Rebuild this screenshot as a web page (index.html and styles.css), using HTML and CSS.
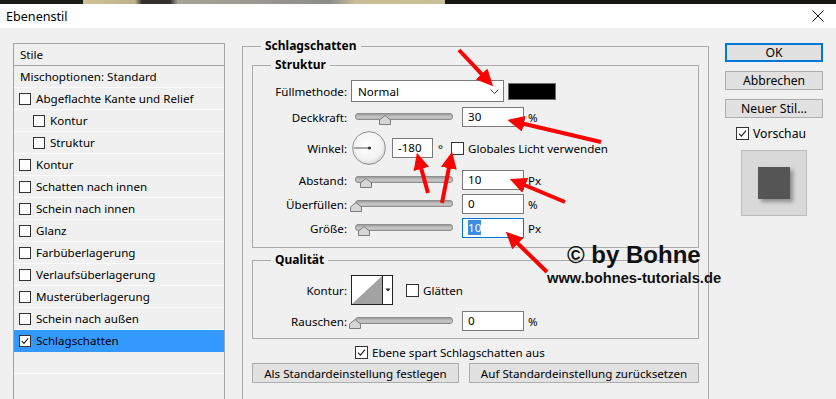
FILE: index.html
```html
<!DOCTYPE html>
<html lang="de">

<head>
    <meta charset="UTF-8">
    <meta name="viewport" content="width=device-width, initial-scale=1.0">
    <title>Ebenenstil</title>
    <link rel="stylesheet" href="styles.css">
</head>

<body>
    <div class="photo-strip"></div>

    <header class="titlebar">
        <span class="title">Ebenenstil</span>
        <svg class="close" width="12" height="12" viewBox="0 0 12 12">
            <path d="M0.5 0.5 L11.5 11.5 M11.5 0.5 L0.5 11.5" stroke="#111" stroke-width="1" fill="none" />
        </svg>
    </header>

    <div class="dialog">
        <ul class="style-list">
            <li class="list-head">Stile</li>
            <li class="plain">Mischoptionen: Standard</li>
            <li><span class="box"></span>Abgeflachte Kante und Relief</li>
            <li class="sub"><span class="box"></span>Kontur</li>
            <li class="sub"><span class="box"></span>Struktur</li>
            <li><span class="box"></span>Kontur</li>
            <li><span class="box"></span>Schatten nach innen</li>
            <li><span class="box"></span>Schein nach innen</li>
            <li><span class="box"></span>Glanz</li>
            <li><span class="box"></span>Farbüberlagerung</li>
            <li><span class="box"></span>Verlaufsüberlagerung</li>
            <li><span class="box"></span>Musterüberlagerung</li>
            <li><span class="box"></span>Schein nach außen</li>
            <li class="selected">
                <span class="box">
                    <svg viewBox="0 0 12 12"><path d="M2.2 6.2 L4.8 8.8 L9.8 2.8" /></svg>
                </span>Schlagschatten
            </li>
            <li class="plain"></li>
        </ul>

        <fieldset class="group outer">
            <legend>Schlagschatten</legend>

            <fieldset class="group inner">
                <legend>Struktur</legend>

                <div class="row row-select">
                    <span class="lbl">Füllmethode:</span>
                    <div class="select">
                        <span>Normal</span>
                        <svg width="9" height="5" viewBox="0 0 9 5"><path d="M0.5 0.5 L4.5 4.5 L8.5 0.5" /></svg>
                    </div>
                    <div class="swatch"></div>
                </div>

                <div class="row gap5">
                    <span class="lbl">Deckkraft:</span>
                    <div class="slider">
                        <svg class="thumb" style="left: 28px" width="12" height="10" viewBox="0 0 12 10"><path d="M6 0.5 L11.5 5 L11.5 9.5 L0.5 9.5 L0.5 5 Z" /></svg>
                    </div>
                    <div class="field">30</div>
                    <span class="unit">%</span>
                </div>

                <div class="row row-angle">
                    <span class="lbl">Winkel:</span>
                    <svg class="dial" width="34" height="34" viewBox="0 0 34 34">
                        <defs>
                            <radialGradient id="dialFill" cx="45%" cy="40%" r="65%">
                                <stop offset="0" stop-color="#ffffff" />
                                <stop offset="0.7" stop-color="#f2f2f2" />
                                <stop offset="1" stop-color="#cfcfcf" />
                            </radialGradient>
                        </defs>
                        <circle cx="17" cy="17" r="16.4" fill="url(#dialFill)" stroke="#8f8f8f" />
                        <line x1="2" y1="17" x2="17" y2="17" stroke="#555" stroke-width="1" />
                        <circle cx="17.5" cy="17" r="1.6" fill="#333" />
                    </svg>
                    <div class="field angle">-180</div>
                    <span class="degree">°</span>
                    <span class="box panel-box"></span>
                    <span class="check-label">Globales Licht verwenden</span>
                </div>

                <div class="row gap5">
                    <span class="lbl">Abstand:</span>
                    <div class="slider">
                        <svg class="thumb" style="left: 9px" width="12" height="10" viewBox="0 0 12 10"><path d="M6 0.5 L11.5 5 L11.5 9.5 L0.5 9.5 L0.5 5 Z" /></svg>
                    </div>
                    <div class="field">10</div>
                    <span class="unit">Px</span>
                </div>

                <div class="row">
                    <span class="lbl">Überfüllen:</span>
                    <div class="slider">
                        <svg class="thumb" style="left: -1px" width="12" height="10" viewBox="0 0 12 10"><path d="M6 0.5 L11.5 5 L11.5 9.5 L0.5 9.5 L0.5 5 Z" /></svg>
                    </div>
                    <div class="field">0</div>
                    <span class="unit">%</span>
                </div>

                <div class="row">
                    <span class="lbl">Größe:</span>
                    <div class="slider">
                        <svg class="thumb" style="left: 7px" width="12" height="10" viewBox="0 0 12 10"><path d="M6 0.5 L11.5 5 L11.5 9.5 L0.5 9.5 L0.5 5 Z" /></svg>
                    </div>
                    <div class="field focused"><span class="sel">10</span></div>
                    <span class="unit">Px</span>
                </div>
            </fieldset>

            <fieldset class="group inner quality">
                <legend>Qualität</legend>

                <div class="row row-contour">
                    <span class="lbl">Kontur:</span>
                    <svg class="contour" width="42" height="30" viewBox="0 0 42 30">
                        <rect x="0.5" y="0.5" width="41" height="29" fill="#fff" stroke="#222" />
                        <polygon points="1,29 31,1 31,29" fill="#a3a3a3" />
                        <line x1="31.5" y1="0" x2="31.5" y2="30" stroke="#222" />
                        <polygon points="34.5,13.5 39.5,13.5 37,16.5" fill="#222" />
                    </svg>
                    <span class="box panel-box"></span>
                    <span class="check-label">Glätten</span>
                </div>

                <div class="row">
                    <span class="lbl">Rauschen:</span>
                    <div class="slider">
                        <svg class="thumb" style="left: -2px" width="12" height="10" viewBox="0 0 12 10"><path d="M6 0.5 L11.5 5 L11.5 9.5 L0.5 9.5 L0.5 5 Z" /></svg>
                    </div>
                    <div class="field">0</div>
                    <span class="unit">%</span>
                </div>
            </fieldset>

            <div class="knockout">
                <span class="box panel-box">
                    <svg viewBox="0 0 12 12"><path d="M2.2 6.2 L4.8 8.8 L9.8 2.8" /></svg>
                </span>
                <span class="check-label">Ebene spart Schlagschatten aus</span>
            </div>

            <div class="defaults">
                <button class="btn set">Als Standardeinstellung festlegen</button>
                <button class="btn reset">Auf Standardeinstellung zurücksetzen</button>
            </div>
        </fieldset>

        <aside class="actions">
            <button class="btn side primary">OK</button>
            <button class="btn side">Abbrechen</button>
            <button class="btn side">Neuer Stil...</button>
            <div class="preview-toggle">
                <span class="box panel-box">
                    <svg viewBox="0 0 12 12"><path d="M2.2 6.2 L4.8 8.8 L9.8 2.8" /></svg>
                </span>
                <span class="check-label">Vorschau</span>
            </div>
            <div class="preview">
                <div class="preview-square"></div>
            </div>
        </aside>
    </div>

    <!-- tutorial annotations drawn over the dialog -->
    <div class="watermark">
        <div class="wm-big">© by Bohne</div>
        <div class="wm-url">www.bohnes-tutorials.de</div>
    </div>

    <svg class="arrows" width="836" height="399" viewBox="0 0 836 399">
        <defs>
            <marker id="head" viewBox="0 0 10 10" refX="6" refY="5" markerWidth="4.2" markerHeight="4"
                markerUnits="strokeWidth" orient="auto" preserveAspectRatio="none">
                <path d="M0 0 L10 5 L0 10 Z" fill="#f00" />
            </marker>
        </defs>
        <line x1="459" y1="50" x2="488.5" y2="81.4" />
        <line x1="601" y1="142" x2="514" y2="121.5" />
        <line x1="428" y1="193" x2="418.7" y2="159.2" />
        <line x1="442" y1="203" x2="450.8" y2="158.3" />
        <line x1="565" y1="202" x2="516" y2="181.5" />
        <line x1="547" y1="272" x2="510.6" y2="236.5" />
    </svg>
</body>

</html>
```

FILE: styles.css
```css
/* General Reset */
* {
    margin: 0;
    padding: 0;
    box-sizing: border-box;
}

html,
body {
    width: 836px;
    height: 399px;
    overflow: hidden;
}

body {
    position: relative;
    font-family: 'Noto Sans', sans-serif;
    font-size: 11.6px;
    color: #000;
    background-color: #f0f0f0;
}

/* strip of the photo behind the window */
.photo-strip {
    height: 4px;
    background: linear-gradient(to right,
            #1c1b17 0, #1c1b17 83px,
            #cdc29a 83px, #bdb28a 135px, #34302a 142px, #34302a 170px,
            #a7a397 178px, #8d8d88 330px, #c8be96 355px, #c9bf97 445px,
            #18170f 445px, #18170f 836px);
}

.titlebar {
    display: flex;
    justify-content: space-between;
    align-items: center;
    height: 24px;
    padding: 0 12px 0 6px;
    background-color: #fff;
    font-size: 12.6px;
}

.close {
    display: block;
}

.dialog {
    display: flex;
    align-items: flex-start;
    height: 371px;
    padding: 10px 0 0 13px;
}

/* left list of styles */
.style-list {
    flex-shrink: 0;
    width: 212px;
    height: 370px;
    margin-top: 5px;
    list-style: none;
    border: 1px solid #a5a5a5;
    background-color: #f0f0f0;
}

.style-list li {
    display: flex;
    align-items: center;
    gap: 5px;
    height: 22px;
    padding-left: 5px;
    border-bottom: 1px solid #fbfbfb;
}

.style-list li.plain {
    padding-left: 6px;
}

.style-list li.list-head {
    padding-left: 6px;
    border-bottom: 1px solid #a5a5a5;
}

.style-list li.sub {
    padding-left: 19px;
}

.style-list li.selected {
    background-color: #3399ff;
    border-bottom-color: #3399ff;
}

.box {
    flex-shrink: 0;
    display: block;
    width: 12px;
    height: 12px;
    border: 1px solid #333;
    background-color: #fff;
}

.box svg {
    display: block;
    width: 10px;
    height: 10px;
}

.box svg path {
    fill: none;
    stroke: #222;
    stroke-width: 1.3;
}

.panel-box {
    width: 13px;
    height: 13px;
}

.panel-box svg {
    width: 11px;
    height: 11px;
}

/* group boxes */
.group {
    min-width: 0;
    border: 1px solid #ababab;
}

.group legend {
    padding: 0 4px;
    font-size: 12px;
    font-weight: bold;
    line-height: 16px;
}

.outer {
    flex-shrink: 0;
    width: 467px;
    height: 380px;
    margin-left: 17px;
    padding: 3px 9px 0;
}

.outer > legend {
    margin-left: 9px;
}

.inner {
    width: 447px;
    padding: 7px 0 9px;
}

.inner > legend {
    margin-left: 18px;
}

.quality {
    margin-top: 4px;
    padding-bottom: 7px;
}

/* form rows */
.row {
    display: flex;
    align-items: center;
    height: 20px;
    margin-top: 4px;
}

.row.gap5 {
    margin-top: 5px;
}

.row-select {
    height: 22px;
    margin-top: 0;
}

.row-angle {
    height: 34px;
}

.row-contour {
    height: 30px;
    margin-top: 0;
}

.quality .row-contour + .row {
    margin-top: 6px;
}

.lbl {
    flex-shrink: 0;
    width: 94px;
    text-align: right;
}

.select {
    display: flex;
    justify-content: space-between;
    align-items: center;
    width: 153px;
    height: 22px;
    margin-left: 4px;
    padding: 0 4px 0 6px;
    border: 1px solid #7a7a7a;
    background-color: #fff;
}

.select svg path {
    fill: none;
    stroke: #444;
    stroke-width: 1;
}

.swatch {
    width: 48px;
    height: 17px;
    margin-left: 4px;
    border: 1px solid #6d6d6d;
    background-color: #000;
}

.slider {
    position: relative;
    flex-shrink: 0;
    width: 106px;
    height: 20px;
    margin-left: 4px;
}

.slider::before {
    content: "";
    position: absolute;
    left: 4px;
    right: 4px;
    top: 6px;
    height: 5px;
    border-radius: 3px;
    border: 1px solid #8d8d8d;
    background: linear-gradient(#9a9a9a, #c9c9c9 60%, #b3b3b3);
}

.thumb {
    position: absolute;
    top: 8px;
}

.thumb path {
    fill: #d6d6d6;
    stroke: #7c7c7c;
    stroke-width: 1;
}

.field {
    flex-shrink: 0;
    width: 62px;
    height: 20px;
    margin-left: 5px;
    padding-left: 5px;
    border: 1px solid #7a7a7a;
    background-color: #fff;
    line-height: 18px;
}

.field.focused {
    border-color: #0078d7;
}

.sel {
    background-color: #3a8fe3;
    color: #fff;
}

.unit {
    margin-left: 4px;
}

.dial {
    flex-shrink: 0;
    margin-left: 5px;
}

.field.angle {
    width: 41px;
    margin-left: 6px;
}

.degree {
    margin-left: 5px;
    margin-right: 8px;
}

.check-label {
    margin-left: 4px;
}

.contour {
    flex-shrink: 0;
    display: block;
    margin-left: 4px;
    margin-right: 13px;
}

.knockout {
    display: flex;
    align-items: center;
    height: 14px;
    margin-top: 6px;
    padding-left: 103px;
}

.defaults {
    display: flex;
    gap: 10px;
    margin-top: 4px;
}

.btn {
    height: 20px;
    border: 1px solid #adadad;
    background-color: #e1e1e1;
    font: inherit;
    color: #000;
}

.btn.set {
    width: 207px;
}

.btn.reset {
    width: 230px;
}

/* right column */
.actions {
    display: flex;
    flex-direction: column;
    align-items: center;
    flex-shrink: 0;
    width: 98px;
    margin-top: 5px;
    margin-left: 16px;
}

.btn.side {
    width: 98px;
    height: 19px;
    margin-bottom: 9px;
    font-size: 12.2px;
    line-height: 15px;
}

.btn.primary {
    border: 2px solid #0078d7;
}

.preview-toggle {
    display: flex;
    align-items: center;
    margin-top: -2px;
    margin-left: -6px;
    font-size: 12.2px;
}

.preview {
    display: flex;
    justify-content: center;
    align-items: center;
    width: 66px;
    height: 66px;
    margin-top: 8px;
    border: 1px solid #bcbcbc;
    background-color: #d9d9d9;
}

.preview-square {
    width: 32px;
    height: 32px;
    background-color: #555;
    box-shadow: 3px 3px 4px rgba(0, 0, 0, 0.35);
}

/* annotations */
.watermark {
    position: absolute;
    left: 547px;
    top: 243px;
    font-family: 'Liberation Sans', Arial, sans-serif;
    font-weight: bold;
    color: #111;
}

.wm-big {
    margin-left: 20px;
    font-size: 24px;
    line-height: 24px;
}

.wm-url {
    margin-top: 4px;
    font-size: 14.7px;
    line-height: 15px;
}

.arrows {
    position: absolute;
    left: 0;
    top: 0;
    pointer-events: none;
}

.arrows line {
    stroke: #f00;
    stroke-width: 4;
    marker-end: url(#head);
}
```
